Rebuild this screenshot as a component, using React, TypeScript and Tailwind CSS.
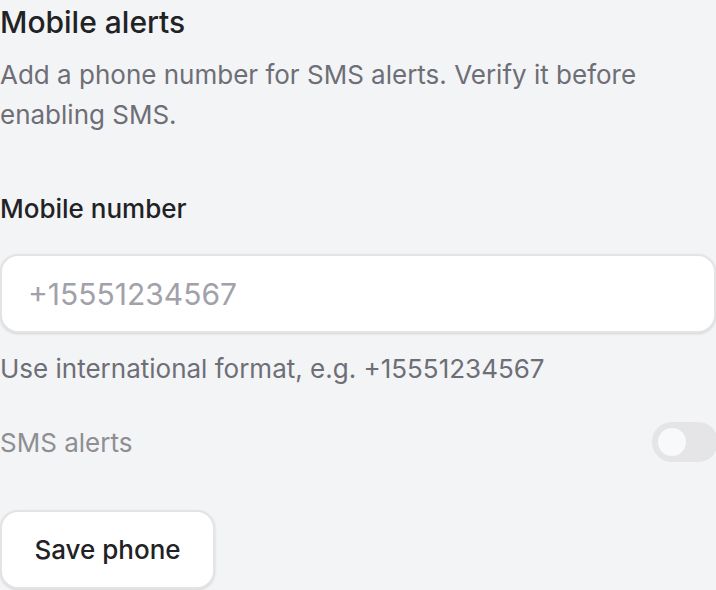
import React, { useState } from 'react';

const App: React.FC = () => {
  const [phone, setPhone] = useState('');

  return (
    <div className="min-h-screen w-full overflow-hidden bg-[#f3f4f6] font-['Inter',sans-serif]">
      <div className="flex w-[716px] flex-col">
        <h2 className="text-[30px] font-medium leading-[44px] text-[#222225]">Mobile alerts</h2>
        <p className="mt-[11px] text-[26px] leading-[40px] text-[#6e6e76]">
          Add a phone number for SMS alerts. Verify it before enabling SMS.
        </p>

        <label htmlFor="mobile" className="mt-[56px] text-[26px] font-medium leading-[36px] text-[#222225]">
          Mobile number
        </label>
        <input
          id="mobile"
          value={phone}
          onChange={(e) => setPhone(e.target.value)}
          placeholder="+15551234567"
          className="mt-[27px] h-[79px] w-full rounded-[18px] border-2 border-[#e4e4e7] bg-white px-[26px] text-[30px] text-[#222225] shadow-sm placeholder:text-[#a1a1aa] focus:outline-none"
        />
        <p className="mt-[18px] text-[26px] leading-[36px] text-[#6e6e76]">
          Use international format, e.g. +15551234567
        </p>

        <div className="mt-[35px] flex h-[40px] items-center justify-between">
          <span className="text-[26px] text-[#8e8e94]">SMS alerts</span>
          <button
            disabled
            aria-label="SMS alerts"
            className="flex h-[40px] w-[66px] -mr-[2px] cursor-not-allowed items-center rounded-full bg-[#e5e5e7] px-[6px]"
          >
            <span className="h-[28px] w-[28px] rounded-full bg-[#f8f9fb]" />
          </button>
        </div>

        <button className="mt-[48px] h-[79px] w-[215px] rounded-[18px] border-2 border-[#e4e4e7] bg-white text-[26px] font-medium text-[#222225] shadow-sm">
          Save phone
        </button>
      </div>
    </div>
  );
};

export default App;
